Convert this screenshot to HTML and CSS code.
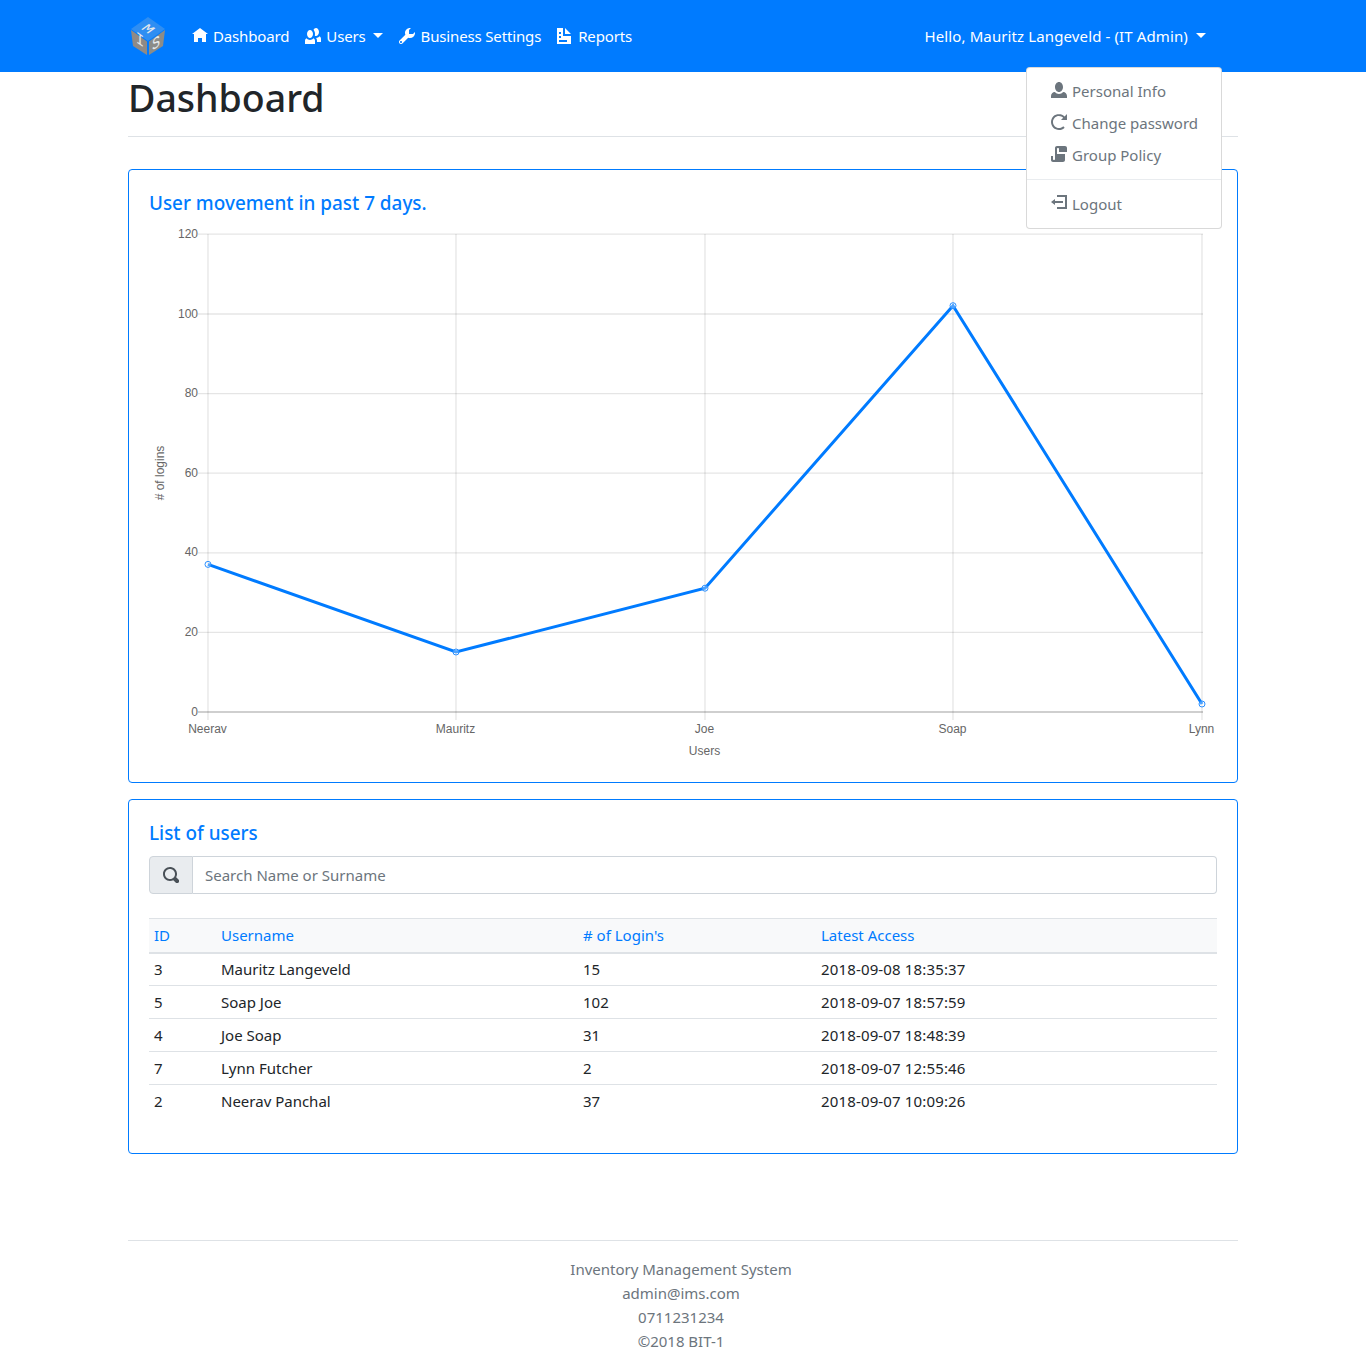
FILE: index.html
```
<!DOCTYPE html>
<html lang="en">
<head>
<meta charset="utf-8">
<title>Dashboard</title>
<link rel="stylesheet" href="styles.css">
</head>
<body>
<svg class="sprites" aria-hidden="true">
  <symbol id="i-home" viewBox="0 0 8 8"><path d="M4 0l-4 3h1v4h2v-2h2v2h2v-4.03l1 .03-4-3z"/></symbol>
  <symbol id="i-people" viewBox="0 0 8 8"><path d="M5.5 0c-.51 0-.95.35-1.22.88.45.54.72 1.28.72 2.13 0 .29-.03.55-.09.81.19.11.38.19.59.19.83 0 1.5-.9 1.5-2s-.67-2-1.5-2zm-3 1c-.83 0-1.5.9-1.5 2s.67 2 1.5 2 1.5-.9 1.5-2-.67-2-1.5-2zm4.75 3.16c-.43.51-1.02.82-1.69.84.27.38.44.84.44 1.34v.66h2v-1.66c0-.52-.31-.97-.75-1.19zm-6.5 1c-.44.22-.75.67-.75 1.19v1.66h5v-1.66c0-.52-.31-.97-.75-1.19-.45.53-1.06.84-1.75.84s-1.3-.32-1.75-.84z"/></symbol>
  <symbol id="i-wrench" viewBox="0 0 8 8"><path d="M5.5 0c-1.38 0-2.5 1.12-2.5 2.5 0 .32.08.62.19.91l-2.91 2.88c-.39.39-.39 1.05 0 1.44.2.2.46.28.72.28.26 0 .52-.09.72-.28l2.88-2.91c.28.11.58.19.91.19 1.38 0 2.5-1.12 2.5-2.5 0-.16 0-.32-.03-.47l-.97.97h-2v-2l.97-.97c-.15-.03-.31-.03-.47-.03zm-4.5 6.5c.28 0 .5.22.5.5s-.22.5-.5.5-.5-.22-.5-.5.22-.5.5-.5z"/></symbol>
  <symbol id="i-doc" viewBox="0 0 8 8"><path d="M0 0v8h7v-4h-4v-4h-3zm4 0v3h3l-3-3zm-3 2h1v1h-1v-1zm0 2h1v1h-1v-1zm0 2h4v1h-4v-1z"/></symbol>
  <symbol id="i-person" viewBox="0 0 8 8"><path d="M4 0c-1.1 0-2 1.12-2 2.5s.9 2.5 2 2.5 2-1.12 2-2.5-.9-2.5-2-2.5zm-2.09 5c-1.06.05-1.91.92-1.91 2v1h8v-1c0-1.08-.84-1.95-1.91-2-.54.61-1.28 1-2.09 1-.81 0-1.55-.39-2.09-1z"/></symbol>
  <symbol id="i-reload" viewBox="0 0 8 8"><path d="M4 0c-2.2 0-4 1.8-4 4s1.8 4 4 4c1.1 0 2.12-.43 2.84-1.16l-.72-.72c-.54.54-1.29.88-2.13.88-1.66 0-3-1.34-3-3s1.34-3 3-3c.83 0 1.55.36 2.09.91l-1.09 1.09h3v-3l-1.19 1.19c-.72-.72-1.71-1.19-2.81-1.19z"/></symbol>
  <symbol id="i-script" viewBox="0 0 8 8"><path d="M3 0c-.55 0-1 .45-1 1v5.500c0 .28-.22.5-.5.5s-.5-.22-.5-.5v-1.500h-1v2c0 .55.45 1 1 1h5c.55 0 1-.45 1-1v-3h-4v-2.500c0-.28.22-.5.5-.5s.5.22.5.5v1.500h4v-2c0-.55-.45-1-1-1h-4z"/></symbol>
  <symbol id="i-logout" viewBox="0 0 8 8"><path d="M3 0v1h4v5h-4v1h5v-7h-5zm-1 2l-2 1.500 2 1.500v-1h4v-1h-4v-1z"/></symbol>
  <symbol id="i-search" viewBox="0 0 8 8"><path d="M3.500 0c-1.930 0-3.500 1.570-3.500 3.500s1.570 3.500 3.500 3.500c.59 0 1.170-.14 1.660-.41a1 1 0 0 0 .13.13l1 1a1.020 1.020 0 1 0 1.440-1.440l-1-1a1 1 0 0 0-.16-.13c.27-.49.44-1.060.44-1.660 0-1.930-1.570-3.500-3.500-3.500zm0 1c1.390 0 2.500 1.110 2.500 2.500 0 .66-.24 1.270-.66 1.720-.01.01-.02.02-.03.03a1 1 0 0 0-.13.13c-.44.4-1.040.63-1.690.63-1.390 0-2.500-1.110-2.500-2.500s1.110-2.500 2.500-2.500z"/></symbol>
</svg>

<nav class="navbar">
  <div class="nav-inner">
    <a class="brand" href="#">
      <svg class="logo" viewBox="0 0 34 38" aria-label="IMS logo">
        <polygon points="17,0 34,12 17,24 0,12" fill="#2f8ef2"/>
        <polygon points="0,13 16,24.500 16,38 2,29" fill="#8f8a86"/>
        <polygon points="34,13 18,24.500 18,38 32,29" fill="#8c8c88"/>
        <text class="logo-l" transform="matrix(.9 .6 -.75 .55 13.600 14.500)">M</text>
        <text class="logo-l" transform="matrix(.9 .65 0 1.100 9 28)">I</text>
        <text class="logo-l" transform="matrix(.9 -.65 0 1.100 25 31)">S</text>
      </svg>
    </a>
    <ul class="nav-list">
      <li><a class="nav-link" href="#"><svg class="ic"><use href="#i-home"/></svg>Dashboard</a></li>
      <li><a class="nav-link" href="#"><svg class="ic"><use href="#i-people"/></svg>Users<span class="caret"></span></a></li>
      <li><a class="nav-link" href="#"><svg class="ic ic-wide"><use href="#i-wrench"/></svg>Business Settings</a></li>
      <li><a class="nav-link" href="#"><svg class="ic"><use href="#i-doc"/></svg>Reports</a></li>
    </ul>
    <div class="user">
      <a class="nav-link" href="#">Hello, Mauritz Langeveld - (IT Admin)<span class="caret"></span></a>
      <div class="menu">
        <a class="menu-item" href="#"><svg class="ic"><use href="#i-person"/></svg>Personal Info</a>
        <a class="menu-item" href="#"><svg class="ic"><use href="#i-reload"/></svg>Change password</a>
        <a class="menu-item" href="#"><svg class="ic"><use href="#i-script"/></svg>Group Policy</a>
        <div class="menu-div"></div>
        <a class="menu-item" href="#"><svg class="ic"><use href="#i-logout"/></svg>Logout</a>
      </div>
    </div>
  </div>
</nav>

<main class="container">
  <h1 class="page-title">Dashboard</h1>

  <section class="card chart-card">
    <h5 class="card-title">User movement in past 7 days.</h5>
    <svg class="chart" viewBox="0 0 1108 552" role="img" aria-label="Line chart of logins per user">
      <g class="grid">
        <path d="M69 4.200H1074M69 84H1074M69 163.600H1074M69 243.200H1074M69 322.800H1074M69 402.400H1074"/>
        <path d="M79 4V490M327 4V490M576 4V490M824 4V490M1073 4V490"/>
      </g>
      <path class="axis" d="M69 482H1074"/>
      <g class="tick-y">
        <text x="69" y="8">120</text><text x="69" y="88">100</text><text x="69" y="167">80</text>
        <text x="69" y="247">60</text><text x="69" y="326">40</text><text x="69" y="406">20</text><text x="69" y="486">0</text>
      </g>
      <g class="tick-x">
        <text x="78.500" y="503">Neerav</text><text x="326.500" y="503">Mauritz</text><text x="575.500" y="503">Joe</text>
        <text x="823.500" y="503">Soap</text><text x="1072.500" y="503">Lynn</text>
        <text x="575.500" y="525">Users</text>
      </g>
      <text class="axis-title" transform="translate(35 243) rotate(-90)">&#35; of logins</text>
      <polyline class="line" points="79,334.400 327,422 576,358.200 824,75.700 1073,474"/>
      <g class="pts">
        <circle cx="79" cy="334.400" r="3"/><circle cx="327" cy="422" r="3"/><circle cx="576" cy="358.200" r="3"/>
        <circle cx="824" cy="75.700" r="3"/><circle cx="1073" cy="474" r="3"/>
      </g>
    </svg>
  </section>

  <section class="card table-card">
    <h5 class="card-title">List of users</h5>
    <div class="search">
      <span class="search-ic"><svg class="ic"><use href="#i-search"/></svg></span>
      <input class="search-in" type="text" placeholder="Search Name or Surname">
    </div>
    <table class="users">
      <thead>
        <tr><th class="c1">ID</th><th class="c2">Username</th><th class="c3"># of Login's</th><th>Latest Access</th></tr>
      </thead>
      <tbody>
        <tr><td>3</td><td>Mauritz Langeveld</td><td>15</td><td class="stamp">2018-09-08 18:35:37</td></tr>
        <tr><td>5</td><td>Soap Joe</td><td>102</td><td class="stamp">2018-09-07 18:57:59</td></tr>
        <tr><td>4</td><td>Joe Soap</td><td>31</td><td class="stamp">2018-09-07 18:48:39</td></tr>
        <tr><td>7</td><td>Lynn Futcher</td><td>2</td><td class="stamp">2018-09-07 12:55:46</td></tr>
        <tr><td>2</td><td>Neerav Panchal</td><td>37</td><td class="stamp">2018-09-07 10:09:26</td></tr>
      </tbody>
    </table>
  </section>

  <footer class="footer">
    <div>Inventory Management System</div>
    <div>admin@ims.com</div>
    <div>0711231234</div>
    <div>©2018 BIT-1</div>
  </footer>
</main>
</body>
</html>
```
FILE: styles.css
```
* { box-sizing: border-box; }
html, body { margin: 0; padding: 0; }
body {
  font-family: "Noto Sans", "Open Sans", sans-serif;
  font-size: 15px;
  line-height: 24px;
  color: #212529;
  background: #fff;
}
a { text-decoration: none; color: inherit; }
.sprites { display: none; }
.ic { width: 16px; height: 16px; fill: currentColor; flex: none; margin-right: 5px; }
.ic-wide { margin-right: 6px; }

.navbar { background: #007bff; height: 72px; color: #fff; }
.nav-inner { width: 1140px; margin: 0 auto; padding: 0 15px; height: 72px; display: flex; align-items: center; }
.brand { display: block; width: 56px; padding-left: 3px; height: 38px; }
.logo { display: block; width: 34px; height: 38px; }
.logo-l { font-family: "Liberation Mono", monospace; font-size: 15px; fill: #e6e9ec; text-anchor: middle; }
.nav-list { list-style: none; margin: 0; padding: 0; display: flex; letter-spacing: -.15px; }
.nav-link { display: flex; align-items: center; padding: 8px; color: #fff; white-space: nowrap; }
.caret { width: 0; height: 0; margin-left: 7px; border-top: 5px solid currentColor; border-left: 5px solid transparent; border-right: 5px solid transparent; position: relative; top: -1px; }
.user { margin-left: auto; position: relative; margin-right: 24px; letter-spacing: .12px; }
.user .caret { margin-left: 8px; }
.menu { position: absolute; top: 51px; right: -8px; width: 196px; height: 162px; padding: 7px 0; background: #fff; border: 1px solid rgba(0,0,0,.15); border-radius: 4px; color: #6c757d; letter-spacing: 0; }
.menu-item { display: flex; align-items: center; height: 32px; padding: 0 24px; white-space: nowrap; }
.menu-item .ic { position: relative; top: -1px; }
.menu-div { height: 1px; margin: 8px 0; background: #e9ecef; }

.container { width: 1110px; margin: 0 auto; }
.page-title { margin: 0; font-size: 37.5px; font-weight: 500; line-height: 48px; padding: 2px 0 14px; height: 65px; border-bottom: 1px solid #dee2e6; }
.card { border: 1px solid #007bff; border-radius: 4px; background: #fff; padding: 21px 20px 20px; }
.chart-card { height: 614px; margin-top: 32px; }
.table-card { height: 355px; margin-top: 16px; }
.card-title { margin: 0; font-size: 18.9px; font-weight: 500; line-height: 24px; color: #007bff; }
.chart { display: block; width: 1108px; height: 552px; margin: 15px 0 0 -20px; overflow: visible; font-family: "Liberation Sans", Arial, sans-serif; font-size: 12px; fill: #666; }
.grid path { stroke: rgba(0,0,0,.1); stroke-width: 1.300; fill: none; }
.axis { stroke: rgba(0,0,0,.25); stroke-width: 1.300; fill: none; }
.tick-y text { text-anchor: end; }
.tick-x text { text-anchor: middle; }
.axis-title { text-anchor: middle; }
.line { fill: none; stroke: #007bff; stroke-width: 3; }
.pts circle { fill: rgba(255,255,255,.3); stroke: #2b90ff; stroke-width: 1; }

.search { display: flex; height: 38px; margin-top: 11px; }
.search-ic { width: 44px; display: flex; align-items: center; justify-content: center; background: #e9ecef; border: 1px solid #ced4da; border-radius: 4px 0 0 4px; color: #495057; }
.search-ic .ic { margin: 0 1px 0 0; }
.search-in { flex: 1; min-width: 0; border: 1px solid #ced4da; border-left: 0; border-radius: 0 4px 4px 0; padding: 0 12px; font: inherit; color: #495057; outline: none; }
.search-in::placeholder { color: #6c757d; opacity: 1; }

.users { width: 100%; margin-top: 24px; border-collapse: collapse; table-layout: fixed; }
.users th { font-weight: 400; color: #007bff; background: #f8f9fa; text-align: left; height: 34px; padding: 0 5px; border-top: 1px solid #dee2e6; border-bottom: 2px solid #dee2e6; }
.users td { height: 33px; padding: 0 5px 1px; border-bottom: 1px solid #dee2e6; }
.users tbody tr:last-child td { border-bottom: 0; }
.users .stamp { letter-spacing: .15px; }
.c1 { width: 67px; }
.c2 { width: 362px; }
.c3 { width: 238px; }

.footer { margin-top: 86px; padding-top: 16px; border-top: 1px solid #dee2e6; text-align: center; color: #6c757d; padding-right: 4px; }
```
